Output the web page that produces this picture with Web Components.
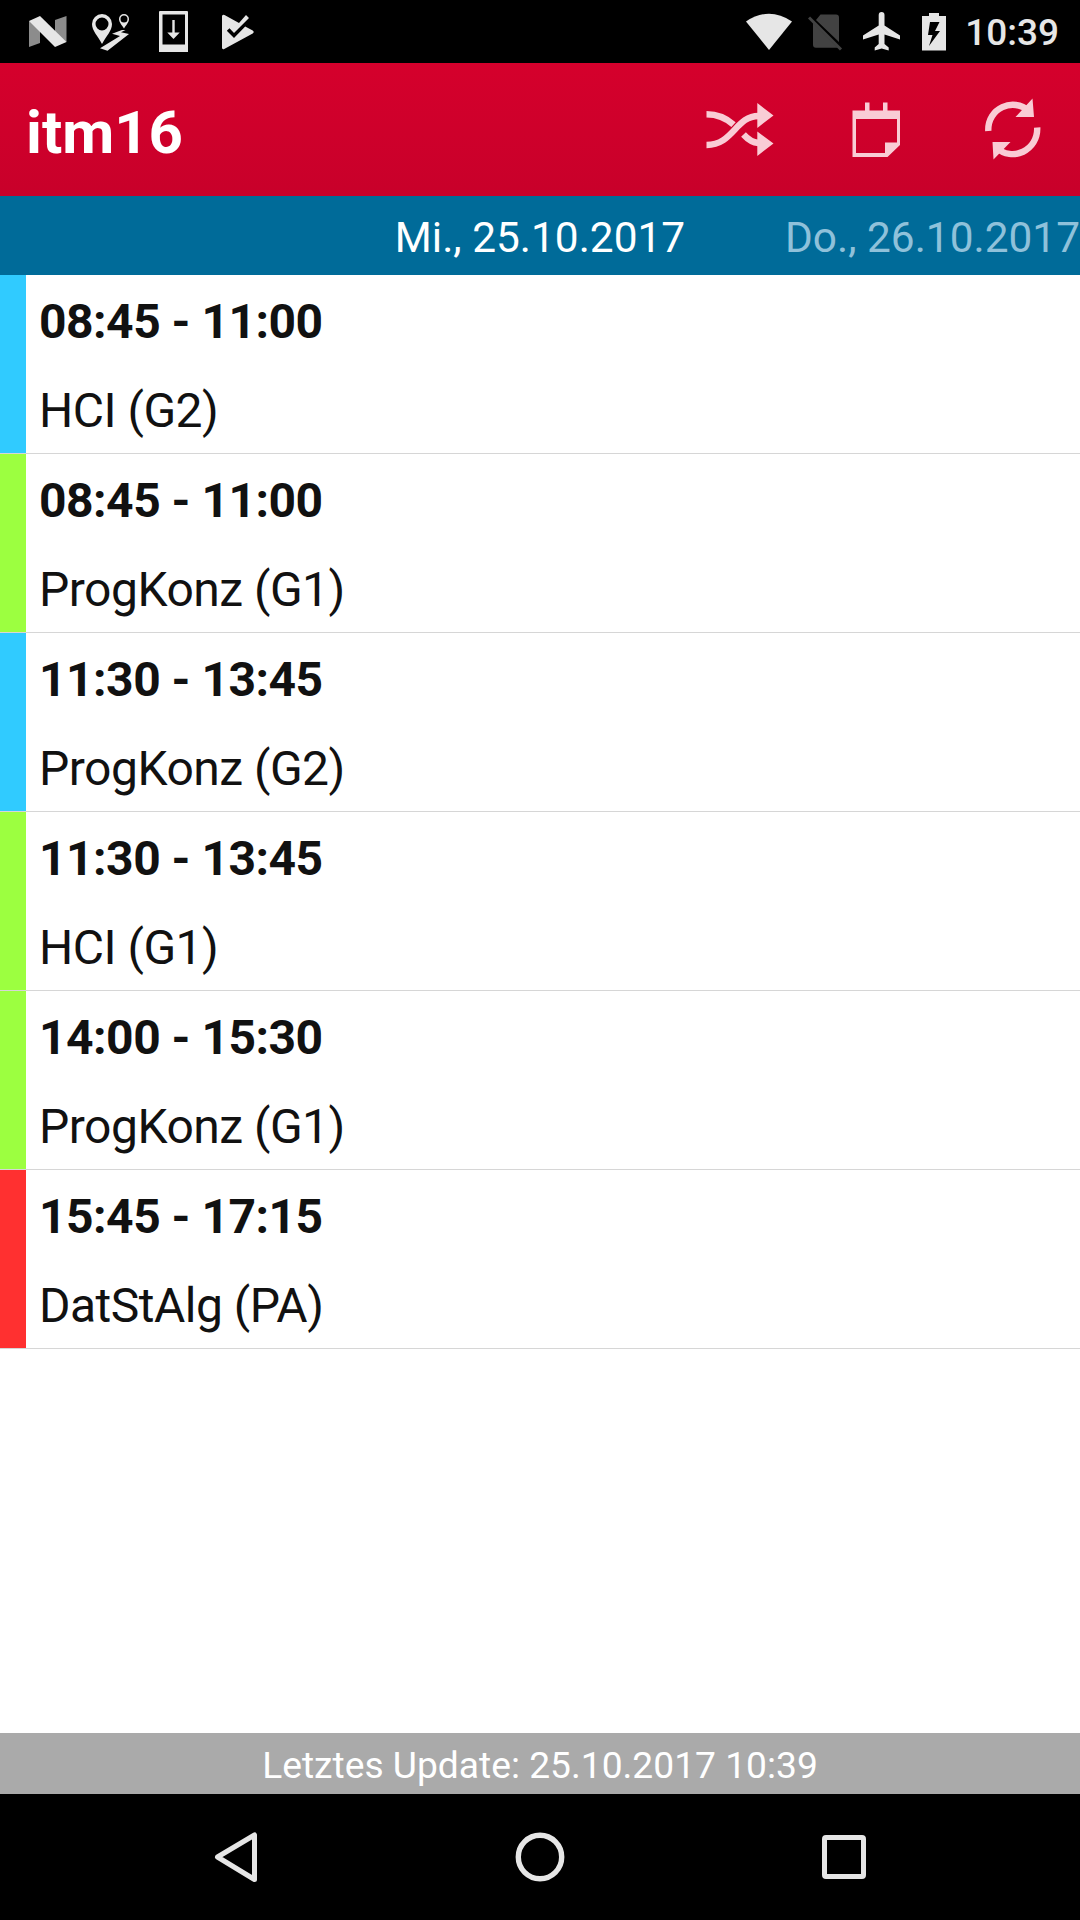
<!DOCTYPE html>
<html lang="de">
<head>
<meta charset="utf-8">
<title>itm16</title>
<style>
  body {
    margin: 0;
    background: #fff;
    font-family: Roboto, sans-serif;
  }
</style>
</head>
<body>
<timetable-app></timetable-app>

<script>
const icons = {
  nougat: `<svg viewBox="28 14 40 35" width="40" height="35">
    <path fill="#8c8c8c" d="M29 21l11 6v16l-11 4zM55 20l11.500-4v26L55 38z"/>
    <path fill="#e6e6e6" d="M29 21l11-5 26.500 26L55 47z"/></svg>`,
  route: `<svg viewBox="90 11 40 40" width="40" height="40">
    <g fill="#e6e6e6"><path fill-rule="evenodd" d="M102 13a10 10 0 0 1 10 10c0 7-6 12-10 20-4-8-10-13-10-20a10 10 0 0 1 10-10zm0 3.500a6.500 6.500 0 1 0 0 13 6.500 6.500 0 0 0 0-13z"/>
    <path fill-rule="evenodd" d="M124 13a5 5 0 0 1 5 5c0 3.500-3 6-5 9.500-2-3.500-5-6-5-9.500a5 5 0 0 1 5-5zm0 1.500a3.500 3.500 0 1 0 0 7 3.500 3.500 0 0 0 0-7z"/>
    <path d="M122 29h3.500l-4.500 2.300 8 1.700-21.500 16.800-7.500-2.600 20-12.200-8-2.300z"/></g></svg>`,
  download: `<svg viewBox="159 11 29 41.500" width="29" height="41.500">
    <path fill="#e6e6e6" fill-rule="evenodd" d="M160 11h27a1 1 0 0 1 1 1v39.500a1 1 0 0 1-1 1h-27a1 1 0 0 1-1-1V12a1 1 0 0 1 1-1zm2.500 3.500v30h22.500v-30z"/>
    <path fill="#e6e6e6" d="M172.300 20h2.400v12.500h5l-6.200 6.500-6.200-6.500h5z"/></svg>`,
  play: `<svg viewBox="221 14 34 36" width="34" height="36">
    <path fill="#e6e6e6" d="M222 16.500q0-2.500 2.500-1.500l14.500 8 7-8 3 3-15 15-4.500-4.800-2.700 2.500 7.200 7.300 11.200-11.500 7.500 4q2 1.500 0 3l-28.500 15.500q-2.200 1-2.200-1.500z"/></svg>`,
  wifi: `<svg viewBox="746 12 47 38" width="47" height="38">
    <path fill="#e6e6e6" d="M746 20.500q23-15.500 46 0L769 49z"/></svg>`,
  nosim: `<svg viewBox="808 13 36 38" width="36" height="38">
    <path fill="#424242" d="M820.500 14.500H836a3 3 0 0 1 3 3v24.500L816 20zM813 22.500l25 25.300H816a3 3 0 0 1-3-3z"/>
    <path stroke="#424242" stroke-width="3" d="M809 17.500l32 32"/></svg>`,
  plane: `<svg viewBox="862 11 39 41" width="39" height="41">
    <path fill="#e6e6e6" d="M900 39.500V35.500l-15.500-10V15a2.900 2.900 0 0 0-5.800 0v10.500L863 35.500v4l15.700-5v9.500l-4 3.500v3l7-2 7 2v-3l-4.200-3.500v-9.500z"/></svg>`,
  battery: `<svg viewBox="922 12 24 38" width="24" height="38">
    <path fill="#e6e6e6" fill-rule="evenodd" d="M929 12h10v3h7v34.500h-24V15h7zm1 9-2 13h4.500l-3.500 11 11-15h-5l4.500-9z"/></svg>`,
  shuffle: `<svg viewBox="706 102 68 55" width="68" height="55">
    <g fill="none" stroke="#f9ccd5" stroke-width="6.400"><path d="M706.500 114.200c12 0 20 4 27 10.500"/>
    <path d="M706.500 145c27 0 29-29 52-29"/><path d="M743.500 134.500c4.500 5 9 8 15 8.500"/></g>
    <path fill="#f9ccd5" d="M757.300 103l16.200 12.500-16.200 12.500zM757.300 131.500l16.200 12-16.200 12.500z"/></svg>`,
  calendar: `<svg viewBox="852 102 48 55" width="48" height="55">
    <path fill="#f9ccd5" fill-rule="evenodd" d="M852.500 110.500H865v-8h4.500v8h13.500v-8h4.500v8h12.500V145l-12.500 12h-35zm3.500 8.500v34h29v-10.500h12V119z"/></svg>`,
  refresh: `<svg viewBox="984 98 58 63" width="58" height="63">
    <g fill="none" stroke="#f9ccd5" stroke-width="6.400"><path d="M988.300 131c-1-23 25-34 40.700-20"/><path d="M1037.200 127.500c1 23-25 35-41.200 20"/></g>
    <path fill="#f9ccd5" d="M1032.500 98.500l1.500 18.500-18.500 0zM992.500 142h18l-17 17.500z"/></svg>`,
  back: `<svg viewBox="214 1832 44 51" width="44" height="51">
    <path fill="none" stroke="#e6e6e6" stroke-width="5" stroke-linejoin="round" d="M254.500 1835v44.500L217.500 1857z"/></svg>`,
  home: `<svg viewBox="0 0 50 50" width="50" height="50">
    <circle cx="25" cy="25" r="21.700" fill="none" stroke="#e6e6e6" stroke-width="5.400"/></svg>`,
  recent: `<svg viewBox="0 0 44 44" width="44" height="44">
    <rect x="2.500" y="2.500" width="39" height="39" rx="1.500" fill="none" stroke="#e6e6e6" stroke-width="5"/></svg>`
};

class AppIcon extends HTMLElement {
  constructor() {
    super();
    this.shadowDOM = this.attachShadow({mode: 'open'});
  }

  connectedCallback() {
    this.shadowDOM.innerHTML = `
    <style>
      :host { display: block; flex: none; }
      svg { display: block; }
    </style>
    ${icons[this.getAttribute('name')]}
    `;
  }
}

class StatusBar extends HTMLElement {
  constructor() {
    super();
    this.shadowDOM = this.attachShadow({mode: 'open'});
  }

  connectedCallback() {
    this.shadowDOM.innerHTML = `
    <style>
      :host {
        display: flex;
        justify-content: space-between;
        height: 63px;
        padding: 0 21px 0 28px;
        box-sizing: border-box;
        background: #000;
        color: #e6e6e6;
      }

      .group {
        display: flex;
        align-items: center;
      }

      .left { gap: 22px; }
      .left app-icon:nth-child(3) { margin-left: 7px; }
      .left app-icon:nth-child(4) { margin-left: 11px; }
      .right { gap: 15px; }
      .right app-icon:nth-child(3) { margin-left: 3px; }
      .right app-icon:nth-child(4) { margin: 0 4px 0 6px; }

      .clock {
        font-size: 37px;
        line-height: 63px;
        font-weight: 500;
        padding-top: 2px;
      }
    </style>
    <div class="group left">
      <app-icon name="nougat"></app-icon>
      <app-icon name="route"></app-icon>
      <app-icon name="download"></app-icon>
      <app-icon name="play"></app-icon>
    </div>
    <div class="group right">
      <app-icon name="wifi"></app-icon>
      <app-icon name="nosim"></app-icon>
      <app-icon name="plane"></app-icon>
      <app-icon name="battery"></app-icon>
      <span class="clock"><slot></slot></span>
    </div>
    `;
  }
}

class ActionBar extends HTMLElement {
  constructor() {
    super();
    this.shadowDOM = this.attachShadow({mode: 'open'});
  }

  connectedCallback() {
    this.shadowDOM.innerHTML = `
    <style>
      :host {
        display: flex;
        align-items: center;
        justify-content: space-between;
        height: 133px;
        padding: 0 38px 0 26px;
        box-sizing: border-box;
        background: linear-gradient(#d5002c, #c8002a);
        color: #fff;
      }

      h1 {
        margin: 0;
        padding-top: 6px;
        font-size: 60px;
        line-height: 70px;
        font-weight: bold;
      }

      .actions {
        display: flex;
        align-items: center;
      }

      .actions app-icon:nth-child(2) { margin: 0 84px 0 78px; }
    </style>
    <h1><slot></slot></h1>
    <div class="actions">
      <app-icon name="shuffle"></app-icon>
      <app-icon name="calendar"></app-icon>
      <app-icon name="refresh"></app-icon>
    </div>
    `;
  }
}

class DayTabs extends HTMLElement {
  constructor() {
    super();
    this.shadowDOM = this.attachShadow({mode: 'open'});
  }

  connectedCallback() {
    this.shadowDOM.innerHTML = `
    <style>
      :host {
        display: grid;
        grid-template-columns: 1fr auto 1fr;
        height: 79px;
        background: #006b99;
        color: #fff;
        font-size: 42.400px;
        line-height: 83px;
        white-space: nowrap;
      }

      .current { grid-column: 2; }

      .next {
        text-align: right;
        color: #8fc1da;
      }
    </style>
    <span class="current"><slot name="current"></slot></span>
    <span class="next"><slot name="next"></slot></span>
    `;
  }
}

class LessonItem extends HTMLElement {
  constructor() {
    super();
    this.shadowDOM = this.attachShadow({mode: 'open'});
  }

  connectedCallback() {
    this.shadowDOM.innerHTML = `
    <style>
      :host {
        display: flex;
        height: 178px;
        border-bottom: 1px solid #d6d6d6;
        color: #111;
        font-size: 48px;
        letter-spacing: -0.500px;
        line-height: 89px;
      }

      .group {
        width: 26px;
        background: ${this.getAttribute('color')};
      }

      .text { padding: 2px 0 0 13px; }
      .time { font-weight: bold; }
    </style>
    <div class="group"></div>
    <div class="text">
      <div class="time">${this.getAttribute('time')}</div>
      <div><slot></slot></div>
    </div>
    `;
  }
}

class UpdateInfo extends HTMLElement {
  constructor() {
    super();
    this.shadowDOM = this.attachShadow({mode: 'open'});
  }

  connectedCallback() {
    this.shadowDOM.innerHTML = `
    <style>
      :host {
        display: block;
        height: 61px;
        background: #aaa;
        color: #fff;
        font-size: 37.200px;
        line-height: 64px;
        text-align: center;
      }
    </style>
    <slot></slot>
    `;
  }
}

class NavBar extends HTMLElement {
  constructor() {
    super();
    this.shadowDOM = this.attachShadow({mode: 'open'});
  }

  connectedCallback() {
    this.shadowDOM.innerHTML = `
    <style>
      :host {
        display: flex;
        align-items: center;
        justify-content: space-between;
        height: 126px;
        padding: 0 214px;
        box-sizing: border-box;
        background: #000;
      }
    </style>
    <app-icon name="back"></app-icon>
    <app-icon name="home"></app-icon>
    <app-icon name="recent"></app-icon>
    `;
  }
}

class TimetableApp extends HTMLElement {
  constructor() {
    super();
    this.shadowDOM = this.attachShadow({mode: 'open'});
  }

  connectedCallback() {
    this.shadowDOM.innerHTML = `
    <style>
      :host {
        display: flex;
        flex-direction: column;
        width: 1080px;
        height: 1920px;
        overflow: hidden;
      }

      main { flex: 1; }
    </style>
    <status-bar>10:39</status-bar>
    <action-bar>itm16</action-bar>
    <day-tabs>
      <span slot="current">Mi., 25.10.2017</span>
      <span slot="next">Do., 26.10.2017</span>
    </day-tabs>
    <main>
      <lesson-item time="08:45 - 11:00" color="#30cbff">HCI (G2)</lesson-item>
      <lesson-item time="08:45 - 11:00" color="#9cff40">ProgKonz (G1)</lesson-item>
      <lesson-item time="11:30 - 13:45" color="#30cbff">ProgKonz (G2)</lesson-item>
      <lesson-item time="11:30 - 13:45" color="#9cff40">HCI (G1)</lesson-item>
      <lesson-item time="14:00 - 15:30" color="#9cff40">ProgKonz (G1)</lesson-item>
      <lesson-item time="15:45 - 17:15" color="#ff3030">DatStAlg (PA)</lesson-item>
    </main>
    <update-info>Letztes Update: 25.10.2017 10:39</update-info>
    <nav-bar></nav-bar>
    `;
  }
}

customElements.define('app-icon', AppIcon);
customElements.define('status-bar', StatusBar);
customElements.define('action-bar', ActionBar);
customElements.define('day-tabs', DayTabs);
customElements.define('lesson-item', LessonItem);
customElements.define('update-info', UpdateInfo);
customElements.define('nav-bar', NavBar);
customElements.define('timetable-app', TimetableApp);
</script>
</body>
</html>
